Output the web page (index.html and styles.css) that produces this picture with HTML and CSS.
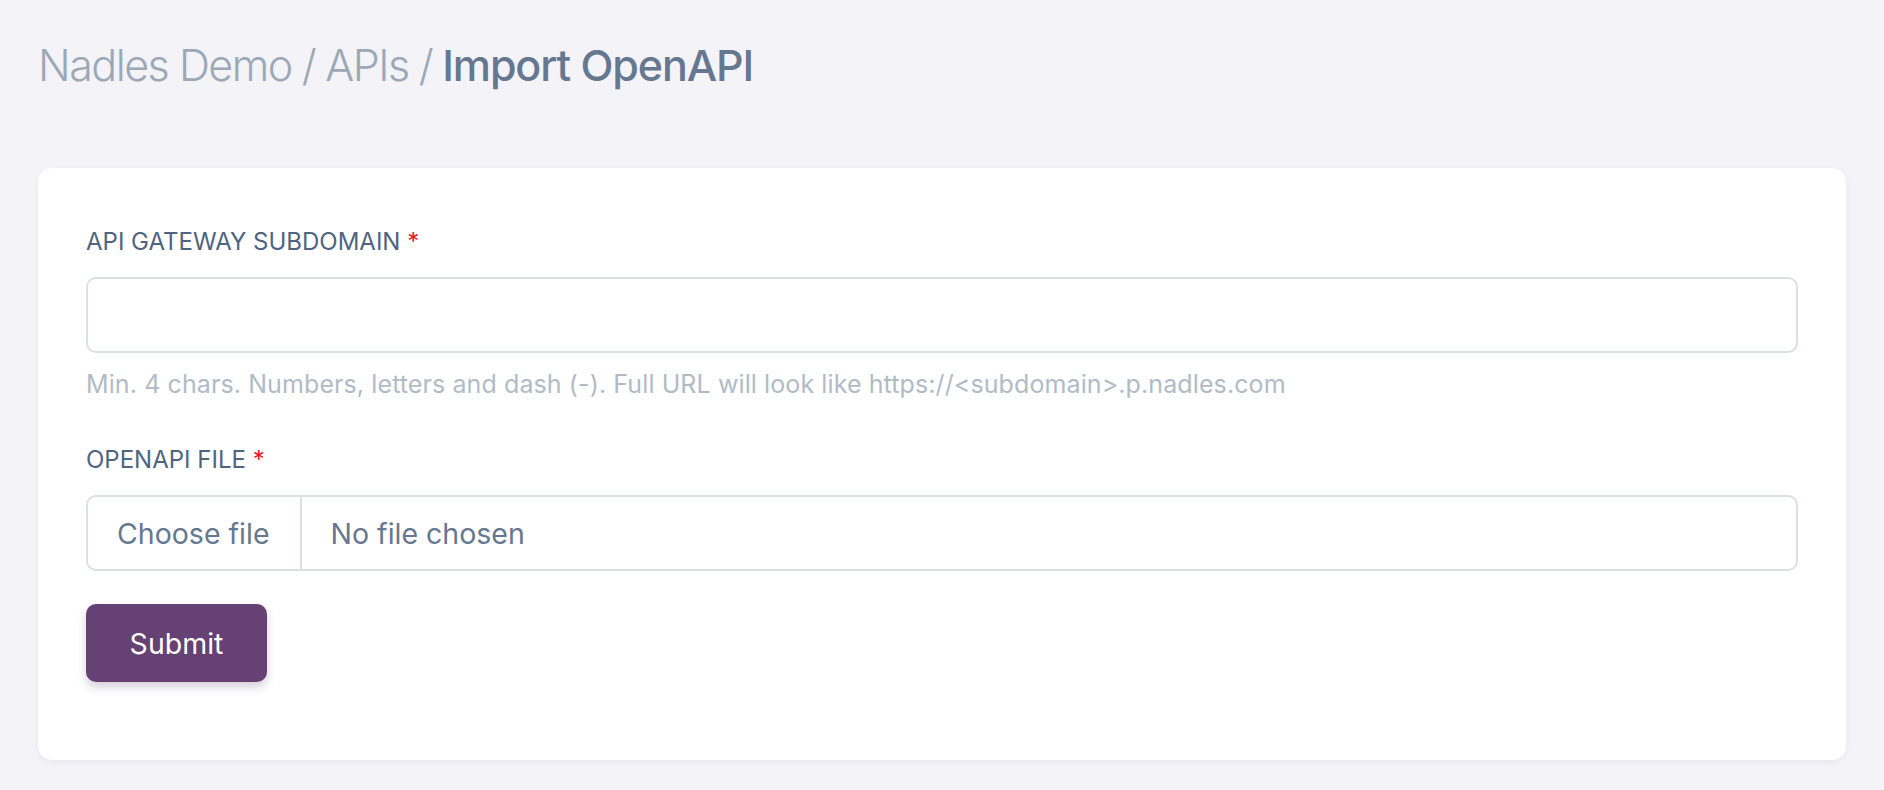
FILE: index.html
```html
<!DOCTYPE html>
<html lang="en">
<head>
<meta charset="utf-8">
<title>Import OpenAPI</title>
<link rel="stylesheet" href="styles.css">
</head>
<body>
<div class="page">
  <h1 class="crumbs">
    <span class="crumb">Nadles Demo</span>
    <span class="sep">/</span>
    <span class="crumb">APIs</span>
    <span class="sep">/</span>
    <span class="current">Import OpenAPI</span>
  </h1>
  <div class="card">
    <form class="form">
      <label class="label" for="subdomain">API GATEWAY SUBDOMAIN <span class="req">*</span></label>
      <input class="input" id="subdomain" type="text">
      <p class="help">Min. 4 chars. Numbers, letters and dash (-). Full URL will look like https://&lt;subdomain&gt;.p.nadles.com</p>
      <label class="label label-second">OPENAPI FILE <span class="req">*</span></label>
      <div class="file">
        <span class="file-btn">Choose file</span>
        <span class="file-name">No file chosen</span>
      </div>
      <button class="submit" type="button">Submit</button>
    </form>
  </div>
</div>
</body>
</html>
```

FILE: styles.css
```css
* { box-sizing: border-box; }
html, body { margin: 0; padding: 0; }
body {
  background: #f3f3f8;
  font-family: Inter, "Noto Sans", "Liberation Sans", sans-serif;
  width: 1884px;
  height: 790px;
  overflow: hidden;
}
.page {
  padding: 39px 38px 0 38px;
}
.crumbs {
  margin: 0 0 77px 0;
  padding-left: 0;
  font-size: 43px;
  line-height: 52px;
  font-weight: 300;
  letter-spacing: -1.5px;
  color: #9ca8b6;
  display: flex;
  gap: 10px;
  white-space: nowrap;
}
.current {
  font-weight: 500;
  letter-spacing: -1.1px;
  color: #66788f;
}
.card {
  background: #ffffff;
  border-radius: 14px;
  box-shadow: 0 2px 6px rgba(30, 40, 80, 0.06);
  padding: 58px 48px 78px 48px;
}
.form {
  display: flex;
  flex-direction: column;
  align-items: flex-start;
}
.label {
  display: block;
  font-size: 24px;
  line-height: 32px;
  font-weight: 400;
  letter-spacing: 0;
  color: #4f6480;
}
.req { color: #f0141e; }
.input {
  margin-top: 19px;
  width: 100%;
  height: 76px;
  border: 2px solid #dbe0e6;
  border-radius: 10px;
  background: #fff;
  font: inherit;
  outline: none;
}
.help {
  margin: 15px 0 0 0;
  font-size: 25px;
  line-height: 32px;
  color: #b1bbc6;
  letter-spacing: 0.1px;
  white-space: nowrap;
}
.label-second { margin-top: 44px; }
.file {
  margin-top: 19px;
  width: 100%;
  height: 76px;
  border: 2px solid #dbe0e6;
  border-radius: 10px;
  display: flex;
  align-items: stretch;
  font-size: 28.5px;
  color: #66788f;
}
.file-btn {
  display: flex;
  align-items: center;
  padding: 0 30px 0 29px;
  border-right: 2px solid #dbe0e6;
}
.file-name {
  display: flex;
  align-items: center;
  padding-left: 29px;
}
.submit {
  margin-top: 33px;
  width: 181px;
  height: 78px;
  border: none;
  border-radius: 10px;
  background: #664173;
  color: #ffffff;
  font-family: inherit;
  font-size: 28.5px;
  box-shadow: 0 5px 10px rgba(70, 40, 90, 0.22);
  cursor: pointer;
}
```
